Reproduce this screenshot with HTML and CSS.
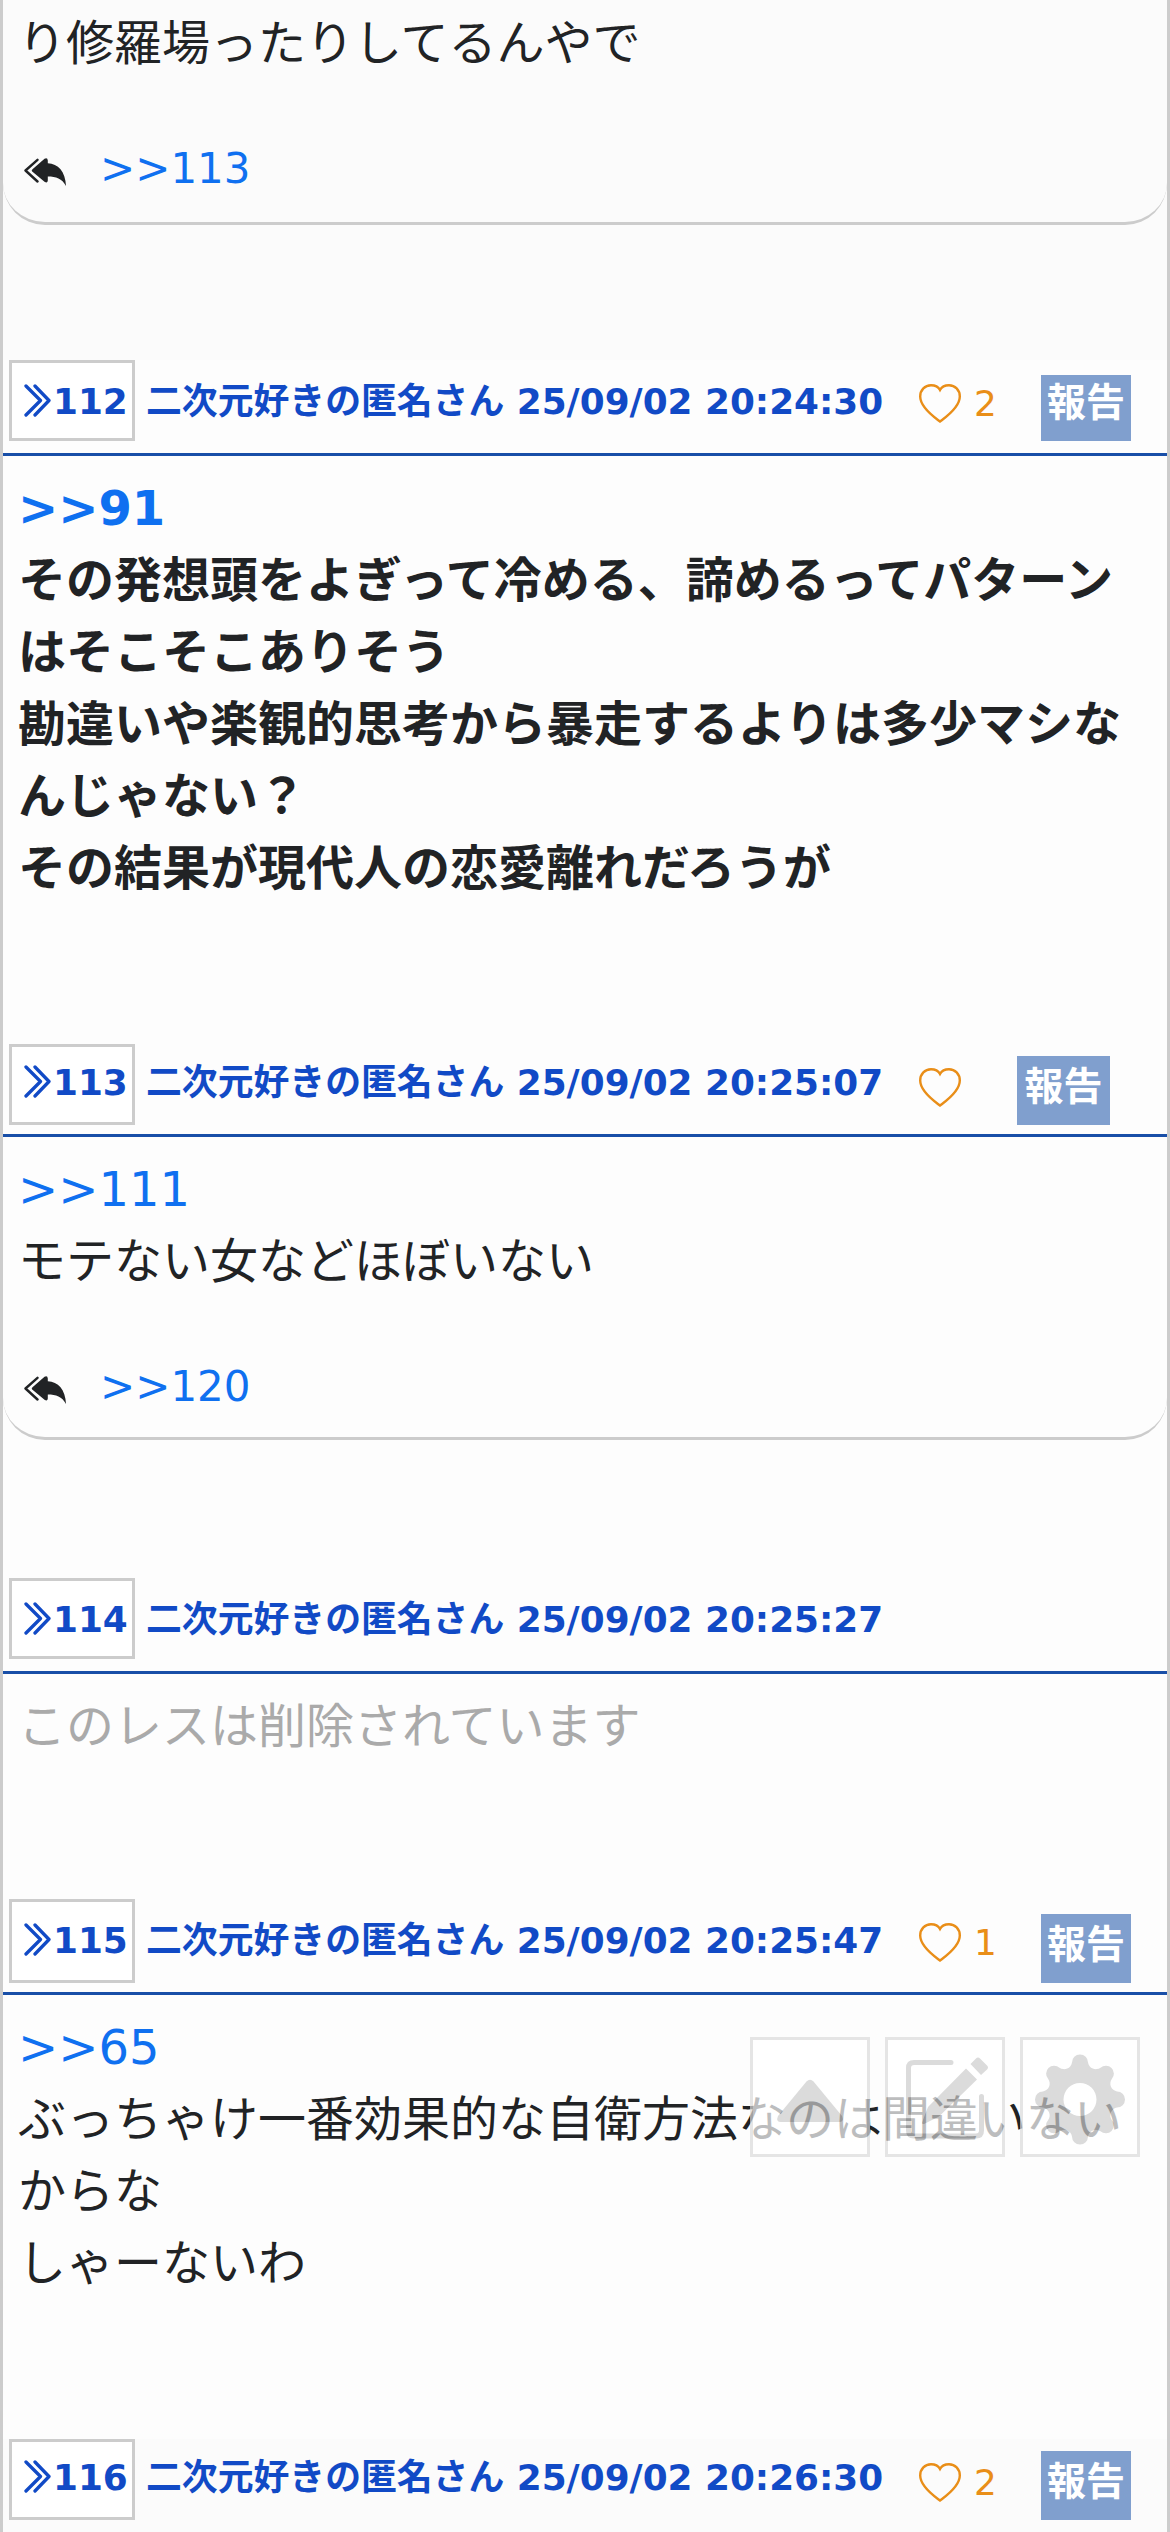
FILE: index.html
```html
<!DOCTYPE html>
<html lang="ja">
<head>
<meta charset="utf-8">
<title>スレッド</title>
<link rel="stylesheet" href="styles.css">
</head>
<body>
<svg class="sprite" aria-hidden="true">
  <symbol id="chevrons" viewBox="0 0 27 33"><path d="M2 2 16.500 16.500 2 31M11 2 25 16.500 11 31" fill="none" stroke="currentColor" stroke-width="3.300" stroke-linecap="round" stroke-linejoin="round"/></symbol>
  <symbol id="heart" viewBox="0 0 42 39"><path d="M21 37.500C16.500 34 1.200 24 1.200 12.500 1.200 6 6 1.200 12 1.200 16.500 1.200 19.500 3.200 21 6 22.500 3.200 25.500 1.200 30 1.200 36 1.200 40.800 6 40.800 12.500 40.800 24 25.500 34 21 37.500Z" fill="none" stroke="currentColor" stroke-width="2.400"/></symbol>
  <symbol id="replies" viewBox="0 0 42 28"><path d="M13.500 1.800 1.500 12.500 13.500 23.500" fill="none" stroke="currentColor" stroke-width="2.400" stroke-linecap="round" stroke-linejoin="round"/><path d="M8.500 11.200 20.500.8Q23.500-.8 23.800 2.500V5.200C34 5.500 41.500 13.500 42 28 38 20.500 32 18.500 23.800 18.500V22.500Q23.500 25.800 20.500 23.800L8.500 13.800Q7 12.500 8.500 11.200Z" fill="currentColor"/></symbol>
</svg>
<main class="thread">
  <article class="post post-first">
    <div class="body body-thread">
      <p class="text">り修羅場ったりしてるんやで</p>
      <div class="replies"><svg class="icon-replies"><use href="#replies"/></svg><a class="link">&gt;&gt;113</a></div>
    </div>
  </article>
  <article class="post">
    <header class="head">
      <span class="num"><svg class="icon-chevrons"><use href="#chevrons"/></svg>112</span>
      <span class="name">二次元好きの匿名さん 25/09/02 20:24:30</span>
      <span class="like"><svg class="icon-heart"><use href="#heart"/></svg>2</span>
      <a class="report report-short">報告</a>
    </header>
    <div class="body">
      <p class="text strong"><a class="link">&gt;&gt;91</a><br>その発想頭をよぎって冷める、諦めるってパターン<br>はそこそこありそう<br>勘違いや楽観的思考から暴走するよりは多少マシな<br>んじゃない？<br>その結果が現代人の恋愛離れだろうが</p>
    </div>
  </article>
  <article class="post">
    <header class="head head-tight">
      <span class="num"><svg class="icon-chevrons"><use href="#chevrons"/></svg>113</span>
      <span class="name">二次元好きの匿名さん 25/09/02 20:25:07</span>
      <span class="like"><svg class="icon-heart"><use href="#heart"/></svg></span>
      <a class="report report-wide">報告</a>
    </header>
    <div class="body body-thread body-reply">
      <p class="text"><a class="link">&gt;&gt;111</a><br>モテない女などほぼいない</p>
      <div class="replies"><svg class="icon-replies"><use href="#replies"/></svg><a class="link">&gt;&gt;120</a></div>
    </div>
  </article>
  <article class="post">
    <header class="head">
      <span class="num"><svg class="icon-chevrons"><use href="#chevrons"/></svg>114</span>
      <span class="name">二次元好きの匿名さん 25/09/02 20:25:27</span>
    </header>
    <div class="body body-deleted">
      <p class="text deleted">このレスは削除されています</p>
    </div>
  </article>
  <article class="post">
    <header class="head head-tall">
      <span class="num"><svg class="icon-chevrons"><use href="#chevrons"/></svg>115</span>
      <span class="name">二次元好きの匿名さん 25/09/02 20:25:47</span>
      <span class="like"><svg class="icon-heart"><use href="#heart"/></svg>1</span>
      <a class="report">報告</a>
    </header>
    <div class="body">
      <p class="text"><a class="link">&gt;&gt;65</a><br>ぶっちゃけ一番効果的な自衛方法なのは間違いない<br>からな<br>しゃーないわ</p>
    </div>
  </article>
  <article class="post post-last">
    <header class="head head-tight">
      <span class="num"><svg class="icon-chevrons"><use href="#chevrons"/></svg>116</span>
      <span class="name">二次元好きの匿名さん 25/09/02 20:26:30</span>
      <span class="like"><svg class="icon-heart"><use href="#heart"/></svg>2</span>
      <a class="report">報告</a>
    </header>
  </article>
</main>
<nav class="tools">
  <button class="tool" aria-label="上へ"><svg viewBox="0 0 120 120"><path d="M56.500 44.500Q60 41 63.500 44.500L92 79Q94.500 85 89 85H31Q25.500 85 28 79Z" fill="#ccc"/></svg></button>
  <button class="tool" aria-label="書き込む"><svg viewBox="0 0 120 120"><path d="M66 25.500H29Q23.500 25.500 23.500 31V93.500Q23.500 99 29 99H91Q96.500 99 96.500 93.500V59.500" fill="none" stroke="#ccc" stroke-width="5" stroke-linecap="round"/><path d="M91 21.500Q93 19.500 95 21.500L102 28.500Q104 30.500 102 32.500L96 38 85.500 27ZM81 31.500 92 42.500 54 79.500 39 87Q36.500 87.500 37 85.500L43 70Z" fill="#ccc"/></svg></button>
  <button class="tool" aria-label="設定"><svg viewBox="0 0 120 120"><path transform="translate(60 62.500)" fill="#ccc" fill-rule="evenodd" d="M-8-37A8 8 0 0 1 8-37A8 8 0 0 0 20.500-31.800A8 8 0 0 1 31.800-20.500A8 8 0 0 0 37-8A8 8 0 0 1 37 8A8 8 0 0 0 31.800 20.500A8 8 0 0 1 20.500 31.800A8 8 0 0 0 8 37A8 8 0 0 1-8 37A8 8 0 0 0-20.500 31.800A8 8 0 0 1-31.800 20.500A8 8 0 0 0-37 8A8 8 0 0 1-37-8A8 8 0 0 0-31.800-20.500A8 8 0 0 1-20.500-31.800A8 8 0 0 0-8-37ZM16.500 0A16.500 16.500 0 1 0-16.500 0A16.500 16.500 0 1 0 16.500 0Z"/></svg></button>
</nav>
</body>
</html>
```
FILE: styles.css
```css
* { box-sizing: border-box; }

body {
  margin: 0;
  height: 2532px;
  overflow: hidden;
  background: #fdfdfd;
  color: #212325;
  font: 48px/72px "DejaVu Sans", "Noto Sans CJK JP", sans-serif;
}

.sprite { display: none; }

.thread {
  height: 2532px;
  border: solid #ccc;
  border-width: 0 3px;
}

.post-first { height: 360px; background: #fbfbfb; }
.post-last { height: 93px; background: #fbfbfb; }

/* Header row */
.head {
  --line: 83px;
  display: flex;
  align-items: flex-start;
  height: 96px;
  padding-left: 6px;
  border-bottom: 3px solid #194fa8;
  color: #114ac6;
  font-size: 35.85px;
  font-weight: bold;
  line-height: var(--line);
  white-space: nowrap;
}

.head-tight { --line: 77px; height: 93px; }
.head-tall { --box: 84px; }
.post-last .head { border-bottom: 0; }

.num {
  display: flex;
  width: 126px;
  height: var(--box, 81px);
  padding-left: 12px;
  border: 3px solid #ccc;
  background: #fff;
  line-height: calc(var(--line) - 6px);
}

.icon-chevrons {
  width: 27px;
  height: 33px;
  margin: calc((var(--line) - 41px) / 2) 2px 0 0;
}

.name { width: 773px; padding-left: 11px; }

.like {
  display: flex;
  width: 80px;
  margin-left: 11px;
  color: #e98e18;
  font-weight: normal;
  line-height: 88px;
}

.icon-heart {
  width: 42px;
  height: 39px;
  margin: 24px 13px 0 0;
}

.report {
  width: 90px;
  height: 69px;
  margin: calc((var(--line) - 77px) / 2 + 12px) 36px 0 auto;
  background: #809fce;
  color: #fff;
  font-size: 39px;
  line-height: 62px;
  text-align: center;
}

.report-short { height: 66px; line-height: 56px; }
.report-wide { width: 93px; margin-right: 57px; }

/* Post contents */
.body { padding: 16px 15px 140px; }
.body-deleted { padding-bottom: 137px; }

.body-thread {
  height: 225px;
  padding-top: 7px;
  padding-bottom: 0;
  border-bottom: 3px solid #ccc;
  border-radius: 0 0 42px 42px;
}

.body-reply {
  height: 303px;
  margin-bottom: 138px;
  padding-top: 16px;
}

.text { margin: 0; }
.strong { font-weight: bold; }
.deleted { color: #aaa; }
.link { color: #0f70f0; }

.replies {
  display: flex;
  align-items: center;
  gap: 34px;
  margin-top: 54px;
  padding-left: 6px;
  font-size: 42px;
}

.icon-replies { width: 42px; height: 28px; margin-top: 6px; }

/* Floating buttons over the thread */
.tools {
  position: fixed;
  top: 2037px;
  right: 30px;
  display: flex;
  gap: 15px;
}

.tool {
  width: 120px;
  height: 120px;
  padding: 0;
  border: 0;
  box-shadow: inset 0 0 0 3px #dadada;
  background: #fff;
  opacity: .7;
}

.tool svg { display: block; width: 120px; height: 120px; }
```
